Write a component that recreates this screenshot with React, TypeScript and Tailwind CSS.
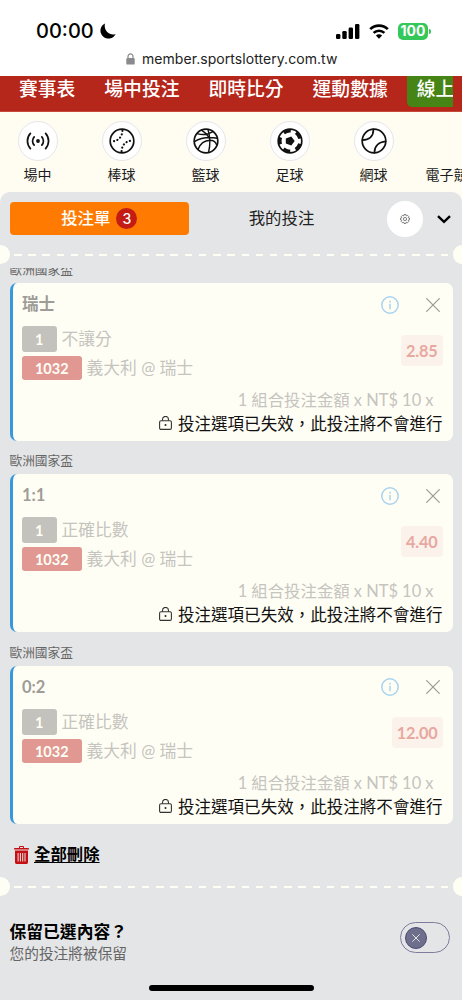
import React, { useState } from 'react';

const navLinks = ['賽事表', '場中投注', '即時比分', '運動數據'];

const sports = [
  { label: '場中', icon: 'live' },
  { label: '棒球', icon: 'baseball' },
  { label: '籃球', icon: 'basketball' },
  { label: '足球', icon: 'soccer' },
  { label: '網球', icon: 'tennis' },
];

const bets = [
  { pick: '瑞士', market: '不讓分', odds: '2.85' },
  { pick: '1:1', market: '正確比數', odds: '4.40' },
  { pick: '0:2', market: '正確比數', odds: '12.00' },
];

const SportIcon = ({ name }: { name: string }) => (
  <svg viewBox="0 0 26 26" className="w-[26px] h-[26px]" fill="none" stroke="#111" strokeWidth="1.7" strokeLinecap="round">
    {name === 'live' && (
      <>
        <circle cx="13" cy="13" r="1.9" fill="#111" stroke="none" />
        <path d="M9.2 8.8a6.2 6.2 0 0 0 0 8.4M16.8 8.8a6.2 6.2 0 0 1 0 8.4M5.4 5.4a11.3 11.3 0 0 0 0 15.2M20.6 5.4a11.3 11.3 0 0 1 0 15.2" />
      </>
    )}
    {name === 'baseball' && (
      <>
        <circle cx="13" cy="13" r="11.8" />
        <path d="M13.4 2.8C13.2 8.6 9.6 13.2 2.6 13.4M12.6 23.2C12.8 17.4 16.4 12.8 23.4 12.6" strokeWidth="2.2" strokeDasharray="0.1 3.5" />
      </>
    )}
    {name === 'basketball' && (
      <>
        <circle cx="13" cy="13" r="11.8" />
        <path d="M8.4 2.2C12.5 4.8 15.4 8 17.2 12M20 3.6C15.5 6.4 9.500 7.2 4.2 5.6M1.4 13.600C8 9.600 16.500 8.800 24.400 10.200M5 21.400C7 16 11 12.400 17.200 12.200 20.600 12.200 22.600 14 23.600 16.800M15 1.600C17 8 17.400 16.500 15.600 24.400" strokeWidth="1.4" />
      </>
    )}
    {name === 'soccer' && (
      <>
        <circle cx="13" cy="13" r="11.8" />
        <circle cx="13" cy="13" r="10.2" strokeWidth="3.4" strokeLinecap="butt" strokeDasharray="7.2 5.618" transform="rotate(16 13 13)" />
        <path d="M8.8 10.400 14.300 8.600 17.700 13 14.300 17.400 8.800 15.600Z" fill="#111" stroke="none" />
      </>
    )}
    {name === 'tennis' && (
      <>
        <circle cx="13" cy="13" r="11.8" />
        <path d="M12.4 1.4C12.5 7.8 8.4 11.6 1.4 12.2M24.6 13.4C17.6 14 13.4 18.2 13.4 24.6" />
      </>
    )}
  </svg>
);

const StatusBar = () => (
  <header className="h-[76px] shrink-0 bg-white font-[Inter,sans-serif] text-black">
    <div className="flex h-[46px] items-end justify-between pl-9 pr-[31px]">
      <div className="flex items-center gap-[6px]">
        <span className="text-[20px] leading-[30px] font-medium">00:00</span>
        <svg viewBox="0 0 16 16" className="w-4 h-4">
          <path d="M5 .4A8 8 0 1 0 15.700 11C10 13.200 3.200 8 5 .4Z" />
        </svg>
      </div>
      <div className="flex h-[30px] items-center gap-[9px]">
        <svg viewBox="0 0 24 15" className="w-6 h-[15px]">
          <rect x="0" y="10" width="4.4" height="5" rx="1.3" />
          <rect x="6.3" y="7" width="4.4" height="8" rx="1.3" />
          <rect x="12.6" y="3.6" width="4.4" height="11.4" rx="1.3" />
          <rect x="19" y="0" width="4.4" height="15" rx="1.3" />
        </svg>
        <svg viewBox="0 0 20 15" className="w-5 h-[15px]" fill="none" stroke="black" strokeWidth="2.6">
          <path d="M1.2 5.2a12.5 12.5 0 0 1 17.6 0M4.6 8.9a7.7 7.7 0 0 1 10.8 0" />
          <path d="M6.9 11.6a4.4 4.4 0 0 1 6.2 0L10 14.8Z" fill="black" stroke="none" />
        </svg>
        <div className="flex items-center gap-px">
          <span className="flex h-[17px] w-[30px] items-center justify-center rounded-[5px] bg-[#35c759] text-[14px] leading-none font-bold text-white">100</span>
          <span className="h-[5px] w-[2px] rounded-r bg-[#35c759]"></span>
        </div>
      </div>
    </div>
    <div className="flex h-[25px] items-center gap-[7px] pl-[126px]">
      <svg viewBox="0 0 9 12" className="w-[9px] h-3">
        <rect x="0.3" y="5" width="8.4" height="6.6" rx="1.2" fill="#8a8a8e" />
        <path d="M2 5.5V3.4a2.5 2.5 0 0 1 5 0v2.1" fill="none" stroke="#8a8a8e" strokeWidth="1.2" />
      </svg>
      <span className="text-[14px] leading-none tracking-[0.06px] text-[#222]">member.sportslottery.com.tw</span>
    </div>
  </header>
);

const Navbar = () => (
  <nav className="flex h-9 shrink-0 overflow-hidden border-b border-[#c8483c] bg-[#b5261b] pr-[9px] pl-[19px] text-[18.8px] leading-[26px] font-medium whitespace-nowrap text-white">
    <div className="flex flex-1 gap-[29px] overflow-hidden">
      {navLinks.map((link) => (
        <a key={link} href="#" className="shrink-0">{link}</a>
      ))}
      <a href="#" className="-ml-[10px] h-[31px] w-[70px] shrink-0 overflow-hidden rounded-bl-[5px] bg-[#468416] pl-[10px]">線上</a>
    </div>
  </nav>
);

const SportTabs = () => (
  <div className="flex h-20 shrink-0 overflow-hidden pt-[9px] pl-[7.5px] text-[14px] leading-5 text-[#1c1c1c]">
    {sports.map((sport) => (
      <div key={sport.label} className="mr-6 flex w-[60px] shrink-0 flex-col items-center gap-[4px]">
        <div className="flex h-10 w-10 items-center justify-center rounded-full border border-[#e6e6ea] bg-white">
          <SportIcon name={sport.icon} />
        </div>
        <span>{sport.label}</span>
      </div>
    ))}
    <span className="-ml-[2px] shrink-0 pt-[44px]">電子競</span>
  </div>
);

const Perforation = () => (
  <div className="flex h-[19px] shrink-0 items-center justify-between overflow-hidden">
    <div className="h-[19px] w-[9.5px] rounded-r-full bg-[#fffef5]"></div>
    <div className="mt-[2px] h-[2.4px] w-[434.5px] bg-[repeating-linear-gradient(90deg,#fffef5_0_7.5px,transparent_7.5px_14.22px)]"></div>
    <div className="h-[19px] w-[9.5px] rounded-l-full bg-[#fffef5]"></div>
  </div>
);

const BetCard = ({ pick, market, odds }: { pick: string; market: string; odds: string }) => (
  <section className="h-[191.3px]">
    <h3 className="h-[26px] pt-[2px] text-[12.7px] leading-5 text-[#666]">歐洲國家盃</h3>
    <div className="h-[158px] overflow-hidden rounded-[7px] border-l-[3.5px] border-[#3799d9] bg-[#fffef5] pr-[10px] pl-[9.5px]">
      <div className="flex h-[43px] items-center">
        <span className="flex-1 text-[16.5px] font-bold text-[#9d9c97]">{pick}</span>
        <svg viewBox="0 0 18 18" className="mr-[26.5px] h-[18px] w-[18px]" fill="none" stroke="#a9d3ef" strokeWidth="1.5">
          <circle cx="9" cy="9" r="8.2" />
          <path d="M9 7.8v5.4M9 4.8v1.6" />
        </svg>
        <svg viewBox="0 0 14 14" className="mr-[3px] h-[14px] w-[14px]" stroke="#9c9b96" strokeWidth="1.2">
          <path d="M.3.3l13.4 13.4M13.7.3.3 13.7" />
        </svg>
      </div>
      <div className="flex h-[54px] items-start justify-between text-[16.8px] leading-6 text-[#c5c4be]">
        <div className="flex flex-col gap-[4px]">
          <div className="flex h-[26px] items-center gap-[5px]">
            <span className="h-[26px] w-[34.5px] rounded-[3px] bg-[#c3c2bc] text-center text-[14.5px] leading-[27px] font-bold text-[#fffef5]">1</span>
            <span>{market}</span>
          </div>
          <div className="flex h-6 items-center gap-[5px]">
            <span className="h-6 w-[59.5px] rounded-[3px] bg-[#e19893] text-center text-[14.5px] leading-[25px] font-bold text-[#fffef5]">1032</span>
            <span>義大利 @ 瑞士</span>
          </div>
        </div>
        <span className="mt-[8.5px] h-[31px] rounded-[4px] bg-[#fcf2ec] px-[5px] text-[16.3px] leading-[31px] font-bold tracking-[-0.2px] text-[#e7a8a0]">{odds}</span>
      </div>
      <div className="pt-[8px] pr-[9px] text-right text-[16.4px] leading-[24px] text-[#c5c4be]">1 組合投注金額 x NT$ 10 x</div>
      <div className="flex items-center justify-end gap-[6.5px] text-[16.55px] leading-[24px] whitespace-nowrap text-[#111]">
        <svg viewBox="0 0 13 14" className="mb-[2px] h-[14px] w-[13px]" fill="none" stroke="#333" strokeWidth="1.1">
          <rect x=".6" y="4.8" width="11.8" height="8.6" rx="1.4" />
          <path d="M3.5 4.8V3.4a3 3 0 0 1 6 0v1.4" />
          <circle cx="6.5" cy="9" r="1" fill="#222" stroke="none" />
        </svg>
        <span>投注選項已失效，此投注將不會進行</span>
      </div>
    </div>
  </section>
);

const App: React.FC = () => {
  const [keep, setKeep] = useState(false);

  return (
    <div className="relative flex h-[1000px] w-[462px] flex-col overflow-hidden bg-[#fffcf2] font-[Lato,'Noto_Sans_CJK_TC',sans-serif]">
      <StatusBar />
      <Navbar />
      <SportTabs />
      <main className="flex flex-1 flex-col rounded-t-[10px] bg-[#e4e5e7]">
        <div className="flex h-[52.5px] shrink-0 items-start pt-[8.5px] pl-[9.5px] text-[16.4px]">
          <button className="mt-[1.5px] flex h-[33px] w-[179.5px] items-center justify-center gap-[6px] rounded-[4px] bg-[#ff7a00] font-medium text-white">
            投注單
            <span className="h-[21px] w-[21px] rounded-full bg-[#c41b14] text-center font-[Inter,sans-serif] text-[14px] leading-[21px]">3</span>
          </button>
          <button className="mt-[1.5px] h-[33px] w-[185px] text-[#222]">我的投注</button>
          <button className="ml-[13px] flex h-9 w-9 items-center justify-center rounded-full bg-white">
            <svg viewBox="0 0 24 24" className="h-[10px] w-[10px]" fill="none" stroke="#555" strokeWidth="1.8">
              <path d="M9.6 1.5h4.8l.8 3 2.8-1.5 3 3-1.5 2.8 3 .8v4.8l-3 .8 1.5 2.8-3 3-2.8-1.5-.8 3H9.6l-.8-3L6 21l-3-3 1.5-2.8-3-.8V9.6l3-.8L3 6l3-3 2.8 1.5Z" />
              <circle cx="12" cy="12" r="3.8" />
            </svg>
          </button>
          <svg viewBox="0 0 14 9" className="mt-[14px] ml-[13.5px] h-[9px] w-[14px]" fill="none" stroke="black" strokeWidth="2.4">
            <path d="M1 1.2l6 5.7 6-5.7" />
          </svg>
        </div>
        <Perforation />
        <div className="mt-[4.5px] h-[564px] shrink-0 overflow-hidden px-[9.5px]">
          <div className="-mt-[11px]">
            {bets.map((bet) => (
              <BetCard key={bet.pick} {...bet} />
            ))}
          </div>
        </div>
        <button className="flex h-[44.5px] shrink-0 items-center gap-[5px] pt-[1px] pl-[14px] text-[16.4px] font-bold text-black">
          <svg viewBox="0 0 15 18" className="h-[18px] w-[15px]" fill="#c50f12">
            <path d="M5 2V.9Q5 0 6 0h3q1 0 1 .9V2h4.2q.8 0 .8.8v.8H0v-.8Q0 2 .8 2Zm1 0h3V1H6ZM1 4.6h13v12Q14 18 12.6 18H2.4Q1 18 1 16.6ZM3.6 7v8.5h1V7Zm2.3 0v8.5h1V7Zm2.3 0v8.5h1V7Zm2.3 0v8.5h1V7Z" fillRule="evenodd" />
          </svg>
          <span className="underline decoration-1 underline-offset-[2px]">全部刪除</span>
        </button>
        <Perforation />
        <div className="flex shrink-0 items-start justify-between pt-[24px] pr-[12px] pl-[9.5px]">
          <div>
            <h2 className="text-[16.8px] leading-[23px] font-bold text-black">保留已選內容？</h2>
            <p className="text-[14.7px] leading-[21px] text-[#666]">您的投注將被保留</p>
          </div>
          <button
            onClick={() => setKeep(!keep)}
            className={`${keep ? 'justify-end' : 'justify-start'} mt-[2.5px] flex h-[31px] w-[50px] items-center rounded-full border border-[#7e7c9c] px-[4px]`}
          >
            <span className="flex h-[22px] w-[22px] items-center justify-center rounded-full border border-[#4d4a77] bg-[#6d6f8b]">
              <svg viewBox="0 0 8 8" className="h-2 w-2" stroke="#e4e5e7" strokeWidth="1">
                <path d="M.3.3l7.4 7.4M7.7.3.3 7.7" />
              </svg>
            </span>
          </button>
        </div>
      </main>
      <div className="absolute bottom-[9.5px] left-[149px] h-[6px] w-[165px] rounded-full bg-black"></div>
    </div>
  );
};

export default App;
